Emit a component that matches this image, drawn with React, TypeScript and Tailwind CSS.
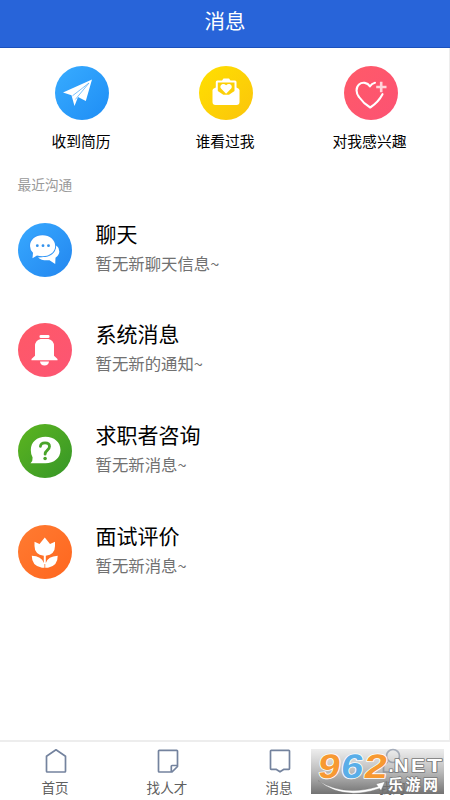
import type { ReactNode } from "react";

const shortcuts = [
  {
    label: "收到简历",
    tone: "from-[#38acff] to-[#1e8df5]",
    icon: (
      <>
        <path d="M8 26.5 37 13.5 30.8 35 23 31 19.5 40 16.5 29.3Z" fill="#fff" />
        <path d="M17.5 29.8 34 17 20.3 33.5" fill="none" stroke="#5ab3fa" strokeWidth=".8" />
      </>
    ),
  },
  {
    label: "谁看过我",
    tone: "from-[#ffe000] to-[#fbc40b]",
    icon: (
      <>
        <path d="M13.5 24Q13.5 22.5 16.8 21.5V16Q16.8 14.5 18.3 14.5H23L24.5 12.5H30L31.5 14.5H36Q37.5 14.5 37.5 16V21.5Q40.5 22.5 40.5 24V36Q40.5 39 37.5 39H16.5Q13.5 39 13.5 36Z" fill="#fff" />
        <path d="M18.8 16.5H35.5V25L30 28.8H24.3L18.8 25Z" fill="#fcd006" />
        <path d="M27.1 27.7 22 22.6C19.8 19.5 24 16.2 27.1 19.3C30.2 16.2 34.4 19.5 32.2 22.6Z" fill="#fff" />
      </>
    ),
  },
  {
    label: "对我感兴趣",
    tone: "from-[#ff5a68] to-[#fc5273]",
    icon: (
      <g fill="none" stroke="#fff" strokeLinecap="round" strokeLinejoin="round">
        <path d="M31 16.7Q27.8 17.4 26 20.3C23.5 16.5 18.3 15.5 15 18.5C11.5 21.6 12 27 15 31Q19.5 37.5 26.2 41.5Q34.5 36 38.5 28.2" strokeWidth="2.1" />
        <path d="M37.2 15.7V26.3M32.2 21H42.5" strokeWidth="2.6" strokeLinecap="butt" opacity=".75" />
      </g>
    ),
  },
];

const threads = [
  {
    title: "聊天",
    note: "暂无新聊天信息~",
    tone: "from-[#38a9ff] to-[#2386ef]",
    icon: (
      <>
        <path d="M38.5 22.5Q41.5 25 41.3 29Q41 32.3 37.5 34.7L37.2 40.9 31.5 37.2Q24 38 20 34.5Q36 34 38.5 22.5Z" fill="#fff" />
        <path d="M24.5 12.2C31.7 12.2 37.2 16.8 37.2 23S31.7 33.2 24.5 33.2Q21.5 33.2 19 32.4L14.5 35.2 15 29.8Q12 27 12 23C12 16.8 17.3 12.2 24.5 12.2Z" fill="#fff" stroke="#3296f6" strokeWidth="1.8" paintOrder="stroke" />
        <g fill="#3292ed"><circle cx="19.3" cy="22.7" r="1.4" /><circle cx="25" cy="22.7" r="1.4" /><circle cx="30.5" cy="22.7" r="1.4" /></g>
      </>
    ),
  },
  {
    title: "系统消息",
    note: "暂无新的通知~",
    tone: "from-[#ff5967] to-[#fc5573]",
    icon: (
      <g fill="#fff">
        <rect x="21.5" y="12" width="10" height="3" rx="1.3" />
        <path d="M22.5 16H30.5Q36 17.5 36 23V32.7L39.5 36V37.3H13.5V36L17 32.7V23Q17 17.5 22.5 16Z" />
        <path d="M22 38.5H31Q30.5 42.5 26.5 42.5T22 38.5Z" />
      </g>
    ),
  },
  {
    title: "求职者咨询",
    note: "暂无新消息~",
    tone: "from-[#5cb51e] to-[#359627]",
    icon: (
      <>
        <path d="M27.5 12.7C36 12.7 42.5 18 42.5 26S36 39.2 27.5 39.2H12.5Q15 36.8 14.6 33.5Q12.8 30.5 12.8 26C12.8 18 19 12.7 27.5 12.7Z" fill="#fff" />
        <path d="M22.4 22.3Q22.8 18.8 27 18.8Q31.5 18.8 31.5 22.5C31.5 26 27.1 26.3 27.1 30.2" fill="none" stroke="#49a42a" strokeWidth="2.8" strokeLinecap="round" />
        <circle cx="27.1" cy="34.5" r="1.8" fill="#49a42a" />
      </>
    ),
  },
  {
    title: "面试评价",
    note: "暂无新消息~",
    tone: "from-[#ff7b31] to-[#ff661e]",
    icon: (
      <g fill="#fff">
        <path d="M16.5 16.7 21.5 19 26.8 12.5 32 19 37 16.7V21Q37 29.5 27.8 30.7V38Q30 31.3 39.7 30.8Q40 40.8 30 42.8H24Q13.6 41 13.8 30.8Q23.5 31 25.8 38V30.7Q16.5 29.5 16.5 21Z" />
        <path d="M26.8 39V43" stroke="#ff792f" strokeWidth=".8" />
      </g>
    ),
  },
];

const tabs = [
  { label: "首页", icon: <path d="M2.5 8.2 12 1.8 21.5 8.2V23.3Q21.5 24 20.8 24H3.2Q2.5 24 2.5 23.3Z" /> },
  { label: "找人才", icon: <path d="M3.2 2.3H20.8Q21.5 2.3 21.5 3V18.5L16 24H3.2Q2.5 24 2.5 23.3V3Q2.5 2.3 3.2 2.3ZM21.5 17.5H16Q15.3 17.5 15.3 18.2V23.8" /> },
  { label: "消息", icon: <path d="M3.2 2.3H20.8Q21.5 2.3 21.5 3V20.5Q21.5 21.3 20.8 21.3H16L12 23.8 8 21.3H3.2Q2.5 21.3 2.5 20.5V3Q2.5 2.3 3.2 2.3Z" /> },
  { label: "我的", icon: <g opacity=".6"><circle cx="12" cy="8" r="6.5" /><path d="M7 14Q2.5 16 2.5 20V24H21.5V20Q21.5 16 17 14" /></g> },
];

function Disc({ tone, children }: { tone: string; children: ReactNode }) {
  return (
    <div className={`size-[54px] shrink-0 rounded-full bg-linear-to-br ${tone}`}>
      <svg viewBox="0 0 54 54" className="size-full">{children}</svg>
    </div>
  );
}

function Watermark() {
  return (
    <svg viewBox="0 0 133 45" className="absolute left-[311px] top-[7px] h-[45px] w-[133px] overflow-visible">
      <defs>
        <linearGradient id="shade" x1="0" y1="0" x2="0" y2="1">
          <stop stopColor="#888" stopOpacity=".15" />
          <stop offset=".5" stopColor="#777" stopOpacity=".5" />
          <stop offset="1" stopColor="#707070" stopOpacity=".98" />
        </linearGradient>
      </defs>
      <rect width="133" height="45" fill="url(#shade)" />
      <g transform="translate(5 0) skewX(-8)" fontFamily="Liberation Sans, sans-serif" fontWeight="700" fontSize="34" stroke="#fff" strokeWidth="1.6" paintOrder="stroke" strokeLinejoin="round">
        <text x="5" y="29" fill="#f79932" textLength="22" lengthAdjust="spacingAndGlyphs">9</text>
        <text x="28" y="29" fill="#5aaee8" textLength="22" lengthAdjust="spacingAndGlyphs">6</text>
        <text x="51" y="29" fill="#f79932" textLength="23" lengthAdjust="spacingAndGlyphs">2</text>
      </g>
      <path d="M7 31.5Q33 48 67 37.5L65 35 74 32.5 70 41.5 68.5 39.5Q32 52 7 31.5Z" fill="#fff" stroke="#777" strokeWidth=".4" />
      <g fill="#fff" stroke="#777" strokeWidth="1.6" paintOrder="stroke" strokeLinejoin="round">
        <g fontFamily="Liberation Sans, sans-serif" fontWeight="700" fontSize="18.5">
          <text x="77.5" y="23">.</text>
          <text x="83" y="23" textLength="14.5" lengthAdjust="spacingAndGlyphs">N</text>
          <text x="100" y="23" textLength="14" lengthAdjust="spacingAndGlyphs">E</text>
          <text x="116" y="23" textLength="15" lengthAdjust="spacingAndGlyphs">T</text>
        </g>
        <text x="77" y="40.5" fontFamily="Noto Sans CJK SC, sans-serif" fontWeight="700" fontSize="15" textLength="50">乐游网</text>
      </g>
    </svg>
  );
}

export default function App() {
  return (
    <main className="flex h-[800px] w-[450px] flex-col overflow-hidden bg-white font-['Noto_Sans_CJK_SC',sans-serif] text-black">
      <header className="flex h-12 shrink-0 items-center justify-center border-b border-[#1b51bd] bg-[#2864d9] pb-[6px] text-[20.5px] leading-none text-white">消息</header>
      <div className="flex min-h-0 flex-1 flex-col border-r border-[#ededed]">
        <section className="grid grid-cols-[144px_144px_145px] pl-[10px] pt-[18px]">
          {shortcuts.map((item) => (
            <div key={item.label} className="flex flex-col items-center">
              <Disc tone={item.tone}>{item.icon}</Disc>
              <span className="mt-[10px] -translate-x-px text-[14.8px] leading-[22px]">{item.label}</span>
            </div>
          ))}
        </section>
        <h2 className="mt-[22px] pl-[17.5px] text-[13.7px] leading-5 text-[#999]">最近沟通</h2>
        <section className="mt-[19px] pl-[17.5px]">
          {threads.map((item) => (
            <article key={item.title} className="flex h-[100.8px] pt-[9.5px]">
              <Disc tone={item.tone}>{item.icon}</Disc>
              <div className="ml-6 mt-[-6px]">
                <h3 className="text-[21px] leading-[32px]">{item.title}</h3>
                <p className="mt-[2px] text-[16.4px] leading-6 text-[#717171]">{item.note}</p>
              </div>
            </article>
          ))}
        </section>
      </div>
      <nav className="relative grid h-[60px] shrink-0 grid-cols-[112px_112px_112px_114px] border-t-2 border-[#ededed] bg-white">
        {tabs.map((tab) => (
          <div key={tab.label} className="flex flex-col items-center pt-[6px]">
            <svg viewBox="0 0 24 26" className="h-[26px] w-6 fill-none stroke-[#74839e] stroke-[1.7]" strokeLinejoin="round">{tab.icon}</svg>
            <span className="mt-[3px] -translate-x-px text-[13.6px] leading-5 text-[#606060]">{tab.label}</span>
          </div>
        ))}
        <Watermark />
      </nav>
    </main>
  );
}
